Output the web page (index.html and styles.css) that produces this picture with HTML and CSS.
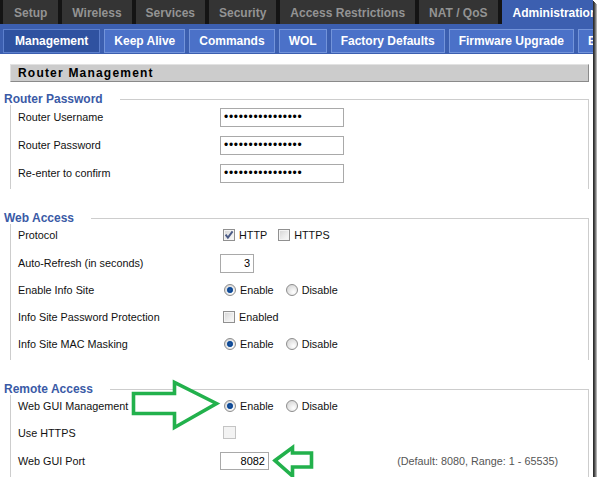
FILE: index.html
```html
<!DOCTYPE html>
<html lang="en">
<head>
<meta charset="utf-8">
<title>Administration - Management</title>
<link rel="stylesheet" href="styles.css">
</head>
<body>
<div class="frame">
  <nav class="tabs">
    <span class="tab">Setup</span>
    <span class="tab">Wireless</span>
    <span class="tab">Services</span>
    <span class="tab">Security</span>
    <span class="tab">Access Restrictions</span>
    <span class="tab">NAT / QoS</span>
    <span class="tab active">Administration</span>
  </nav>
  <nav class="subtabs">
    <span class="subtab active">Management</span>
    <span class="subtab">Keep Alive</span>
    <span class="subtab">Commands</span>
    <span class="subtab">WOL</span>
    <span class="subtab">Factory Defaults</span>
    <span class="subtab">Firmware Upgrade</span>
    <span class="subtab">Backup</span>
  </nav>
  <main class="main">
    <h2 class="bar">Router Management</h2>

    <section class="group">
      <div class="group-head"><span class="legend">Router Password</span><span class="rule"></span></div>
      <div class="group-body">
        <div class="row tall"><span class="lbl">Router Username</span><input class="txt pw" type="password" value="xxxxxxxxxxxxxxxx" readonly></div>
        <div class="row tall"><span class="lbl">Router Password</span><input class="txt pw" type="password" value="xxxxxxxxxxxxxxxx" readonly></div>
        <div class="row tall"><span class="lbl">Re-enter to confirm</span><input class="txt pw" type="password" value="xxxxxxxxxxxxxxxx" readonly></div>
      </div>
    </section>

    <section class="group">
      <div class="group-head"><span class="legend">Web Access</span><span class="rule"></span></div>
      <div class="group-body">
        <div class="row"><span class="lbl">Protocol</span>
          <label class="opt"><span class="cb on"><svg viewBox="0 0 12 12" width="12" height="12"><path d="M2.6 5.6 L4.9 8.6 L9.6 2.4" fill="none" stroke="#4b5b86" stroke-width="1.9"/></svg></span>HTTP</label>
          <label class="opt"><span class="cb"></span>HTTPS</label>
        </div>
        <div class="row tall"><span class="lbl">Auto-Refresh (in seconds)</span><input class="txt num short" type="text" value="3" readonly></div>
        <div class="row"><span class="lbl">Enable Info Site</span>
          <label class="opt"><span class="radio on"></span>Enable</label>
          <label class="opt"><span class="radio"></span>Disable</label>
        </div>
        <div class="row"><span class="lbl">Info Site Password Protection</span>
          <label class="opt"><span class="cb"></span>Enabled</label>
        </div>
        <div class="row"><span class="lbl">Info Site MAC Masking</span>
          <label class="opt"><span class="radio on"></span>Enable</label>
          <label class="opt"><span class="radio"></span>Disable</label>
        </div>
      </div>
    </section>

    <section class="group">
      <div class="group-head"><span class="legend">Remote Access</span><span class="rule"></span></div>
      <div class="group-body">
        <div class="row"><span class="lbl">Web GUI Management</span>
          <label class="opt"><span class="radio on"></span>Enable</label>
          <label class="opt"><span class="radio"></span>Disable</label>
        </div>
        <div class="row"><span class="lbl">Use HTTPS</span>
          <span class="cb off"></span>
        </div>
        <div class="row tall"><span class="lbl">Web GUI Port</span><input class="txt num port" type="text" value="8082" readonly><span class="hint">(Default: 8080, Range: 1 - 65535)</span></div>
      </div>
    </section>
  </main>

  <svg class="arrows" width="593" height="477" viewBox="0 0 593 477" aria-hidden="true">
    <path d="M133.5 393.5 H174.5 V382.5 L216.5 403.5 L174.5 427.5 V413.5 H133.5 Z" fill="#fff" stroke="#22b14c" stroke-width="3.6" stroke-linejoin="miter"/>
    <path d="M275 460.5 L292.5 447.5 V453 H311.5 V467 H292.5 V476 Z" fill="#fff" stroke="#22b14c" stroke-width="3.6" stroke-linejoin="miter"/>
  </svg>
</div>
</body>
</html>
```

FILE: styles.css
```css
* { box-sizing: border-box; }

html, body {
  margin: 0;
  padding: 0;
  background: #fff;
}

body {
  font-family: "Liberation Sans", Arial, sans-serif;
  font-size: 10.8px;
  color: #111;
}

.frame {
  position: relative;
  width: 593px;
  height: 477px;
  overflow: hidden;
  background: #fff;
  box-shadow: 1px 1px 0 #2e2e2e, 2px 2px 0 #4a4a4a, 3px 3px 0 #7a7a7a, 4px 4px 0 #b0b0b0;
}

/* top tabs */
.tabs {
  display: flex;
  height: 24px;
  padding-left: 3px;
  background: #141414;
  white-space: nowrap;
}

.tab {
  flex: none;
  height: 24px;
  padding: 2px 10px 0;
  margin-right: 4px;
  line-height: 22px;
  background: #343434;
  color: #939393;
  font-size: 12px;
  font-weight: bold;
}

.tab:first-child { padding: 2px 11px 0; }

.tab.active {
  padding-left: 11px;
  background: #3c5fb0;
  color: #fff;
}

/* sub tabs */
.subtabs {
  display: flex;
  height: 30px;
  padding: 5px 0 1px 3px;
  background: #3c5fb0;
  white-space: nowrap;
}

.subtab {
  flex: none;
  height: 24px;
  padding: 0 9px;
  margin-right: 4px;
  line-height: 22px;
  border: 1px solid #7394da;
  background: #4b71c8;
  color: #fff;
  font-size: 12px;
  font-weight: bold;
}

.subtab.active {
  padding: 0 11px;
  border-color: #5c7fcc;
  background: #2f52a0;
}

/* main */
.main {
  padding: 10px 4px 0 4px;
}

.bar {
  margin: 0 0 0 6px;
  height: 18px;
  padding-left: 7px;
  line-height: 16px;
  border-top: 1px solid #e2e2e2;
  border-left: 1px solid #e2e2e2;
  border-bottom: 1px solid #8a8a8a;
  border-right: 1px solid #8a8a8a;
  background: #cccccc;
  color: #000;
  font-size: 12px;
  font-weight: bold;
  letter-spacing: 1.2px;
}

.group {
  margin-top: 11px;
}

.group + .group {
  margin-top: 23px;
}

.group-head {
  display: flex;
  height: 12px;
}

.legend {
  line-height: 12px;
  color: #3a5aa6;
  font-size: 12px;
  font-weight: bold;
}

.rule {
  flex: 1;
  align-self: flex-end;
  height: 6px;
  margin-left: 17px;
  border-top: 1px solid #cdcdcd;
  border-right: 1px solid #cdcdcd;
}

.group-body {
  margin-left: 6px;
  padding-left: 7px;
  border-left: 1px solid #cdcdcd;
  border-right: 1px solid #cdcdcd;
}

.row {
  display: flex;
  align-items: center;
  height: 27px;
  padding-bottom: 6px;
}

.row.tall {
  height: 28px;
  padding-bottom: 4px;
}

.lbl {
  flex: none;
  width: 202px;
  color: #111;
}

/* text inputs */
.txt {
  height: 19px;
  margin: 0;
  padding: 0 3px;
  border: 1px solid #a9a9a9;
  background: #fff;
  color: #000;
  font-family: "Liberation Sans", Arial, sans-serif;
  font-size: 11px;
  outline: none;
}

.pw {
  width: 124px;
  font-size: 12px;
  letter-spacing: 0.7px;
}

.num { text-align: right; font-size: 11px; }
.short { width: 34px; }
.port { width: 49px; height: 18px; }

.hint {
  margin-left: auto;
  margin-right: 30px;
  color: #555;
}

/* options */
.opt {
  display: flex;
  align-items: center;
  margin-right: 8px;
  color: #111;
}

.cb {
  display: inline-block;
  flex: none;
  width: 12px;
  height: 12px;
  margin: 1px 4px 0 3px;
  border: 1px solid #909090;
  background: linear-gradient(135deg, #d4d4d4 0%, #ececec 55%, #fbfbfb 100%);
  box-shadow: inset 0 0 0 1px #f4f4f4;
}

.cb svg { display: block; margin: -1px; }

.cb.off {
  border-color: #c4c4c4;
  background: #f3f3f3;
  box-shadow: none;
  width: 13px;
  height: 13px;
  margin-top: 0;
}

.radio {
  display: inline-block;
  flex: none;
  width: 12px;
  height: 12px;
  margin: 1px 4px 0 4px;
  border: 1px solid #8d8d8d;
  border-radius: 50%;
  background: radial-gradient(circle at 65% 70%, #ffffff 0%, #e6e6e6 50%, #cfcfcf 100%);
}

.radio.on {
  background:
    radial-gradient(circle at 50% 50%, #1d5fae 0, #0d3f86 2.4px, #6aa6e6 3.2px, rgba(255,255,255,0) 3.4px),
    radial-gradient(circle at 65% 70%, #ffffff 0%, #e6e6e6 50%, #cfcfcf 100%);
}

/* annotation arrows */
.arrows {
  position: absolute;
  top: 0;
  left: 0;
  pointer-events: none;
}
```
